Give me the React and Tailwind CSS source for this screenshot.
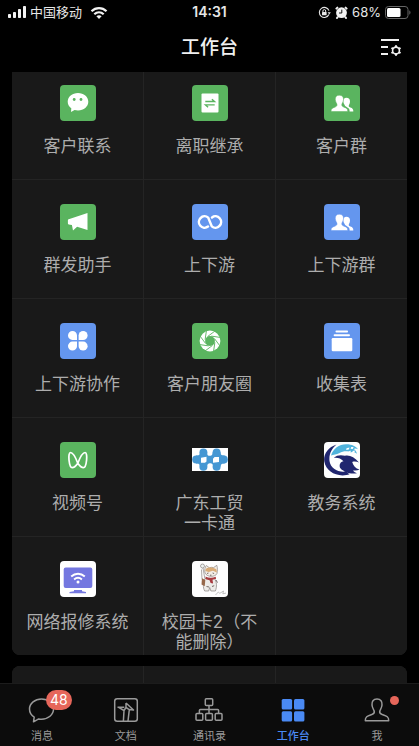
import React, { useState } from 'react';

const GREEN = '#5ab45f';
const BLUE = '#6496ee';

function Tile({ color, children }) {
  return (
    <svg viewBox="0 0 36 36" className="size-9" aria-hidden="true">
      <rect width="36" height="36" rx="4" fill={color} />
      {children}
    </svg>
  );
}

const ContactIcon = () => (
  <Tile color={GREEN}>
    <path d="M18 8C12.2 8 7.7 11.8 7.7 16.7c0 2.7 1.4 5 3.6 6.6L11 27l3.6-2.1c1.1.3 2.2.5 3.4.5 5.8 0 10.3-3.9 10.3-8.7S23.8 8 18 8z" fill="#fff" />
    <circle cx="14.2" cy="14.5" r="1.4" fill={GREEN} />
    <circle cx="21" cy="14.5" r="1.4" fill={GREEN} />
  </Tile>
);

const HandoverIcon = () => (
  <Tile color={GREEN}>
    <rect x="9.5" y="8.5" width="17" height="19" rx="1" fill="#fff" />
    <path d="M13.3 16.5h9.2l-2.6-2.3M22.7 19.9h-9.2l2.6 2.3" fill="none" stroke={GREEN} strokeWidth="1.4" />
  </Tile>
);

const GroupIcon = ({ color }) => (
  <Tile color={color}>
    <path d="M22.5 12.8c-2.5 0-3.4 1.9-3.2 4 .2 1.5 1 2.4 1.3 3.3.2 1.4 3 2.3 4.2 3.5.6.7.8 1.8.8 2.9h3.7c.2-2.6-.8-3.3-2.9-4.1-1.7-.6-2-1.4-1.4-2.5.7-1.2 1-2.2 1-3.5 0-2.3-1.3-3.6-3.5-3.6z" fill="#fff" />
    <path d="M15.2 10.2c-2.9 0-4.1 2-3.9 4.6.1 1.9 1.1 3 1.6 4.3.5 1.6-.4 2.5-2.1 3.1-2.6.9-3.9 1.5-3.7 4.3h16.6c.2-2.8-1.1-3.4-3.7-4.3-1.8-.6-2.6-1.5-2.1-3.1.5-1.3 1.4-2.4 1.6-4.3.2-2.7-1.2-4.6-4.3-4.6z" fill="#fff" stroke={color} strokeWidth=".5" />
  </Tile>
);

const BroadcastIcon = () => (
  <Tile color={GREEN}>
    <path d="M27.5 9v17l-10.4-3.3L13 26.6 11.9 21l-3.2-.6c-.5-.1-.8-.4-.8-.9v-3.2c0-.5.3-.9.8-1z" fill="#fff" />
  </Tile>
);

const LinkIcon = () => (
  <Tile color={BLUE}>
    <path d="M16 22.6A5.7 5.7 0 1 1 16.2 13.6L19.8 22.4A5.7 5.7 0 1 0 20 13.4" fill="none" stroke="#fff" strokeWidth="2.5" strokeLinecap="round" strokeLinejoin="round" />
  </Tile>
);

const CollabIcon = () => (
  <Tile color={BLUE}>
    {[0, 90, 180, 270].map(deg => (
      <path key={deg} d="M17 17h-4.6A4.5 4.5 0 1 1 17 12.5z" transform={`rotate(${deg} 17.8 17.8)`} fill="#fff" />
    ))}
  </Tile>
);

const MomentsIcon = () => (
  <Tile color={GREEN}>
    <circle cx="18" cy="18" r="10.4" fill="#fff" />
    <circle cx="18" cy="18" r="4.9" fill={GREEN} />
    {[0, 45, 90, 135, 180, 225, 270, 315].map(deg => (
      <path key={deg} d="M15.5 13.6 23 8" transform={`rotate(${deg} 18 18)`} stroke={GREEN} strokeWidth=".9" />
    ))}
  </Tile>
);

const FormIcon = () => (
  <Tile color={BLUE}>
    <rect x="11.5" y="7.6" width="12.5" height="1.9" rx=".8" fill="#fff" />
    <rect x="9.7" y="11.2" width="16.2" height="2" rx=".8" fill="#fff" />
    <rect x="7.7" y="15" width="20.6" height="13.2" rx="1.2" fill="#fff" />
  </Tile>
);

const ChannelsIcon = () => (
  <Tile color={GREEN}>
    <path
      d="M17.8 21.2C16 16.5 12.8 10.5 10.5 10.5c-3 0-1.5 15.2 1.7 15.2 1.9 0 3.8-1.9 5.6-4.5 1.8-4.7 5-10.7 7.3-10.7 3 0 1.5 15.2-1.7 15.2-1.9 0-3.8-1.9-5.6-4.5z"
      fill="none" stroke="#fff" strokeWidth="1.7" strokeLinejoin="round"
    />
  </Tile>
);

const CardIcon = () => (
  <svg viewBox="0 0 36 36" className="size-9" aria-hidden="true">
    <rect y="6" width="36" height="23" fill="#fff" />
    <g fill="#4597d3">
      <circle cx="4.2" cy="17.5" r="4" />
      <circle cx="11.4" cy="10.5" r="4" />
      <circle cx="11.4" cy="24.7" r="4" />
      <circle cx="24.6" cy="10.5" r="4" />
      <circle cx="24.6" cy="24.7" r="4" />
      <circle cx="31.8" cy="17.5" r="4" />
      <path d="M4 13.5c3 .5 4-1 4-3h7c0 3 1.6 3.6 3.3 3.3 1.7-.3 2.3-1.3 2.3-3.3h8c0 2 1 3.5 4 3v8c-3-.5-4 1-4 3h-7.5c0-2.5-1.5-3.6-3.2-3.3-1.7.3-2.9 1.3-2.9 3.3H8c0-2-1-3.5-4-3z" />
    </g>
    <path d="M9 15.7l5.5-1v4.8l-1.5 1.3H9zM21 16.8l1.6-1.8h4.4v4.9l-6 .8z" fill="#fff" />
  </svg>
);

const AcademicIcon = () => (
  <Tile color="#fdfefe">
    <path d="M7 13.5C9 6.5 15.5 2 22.5 2.2c5.5.1 9.5 2 11.5 5-2-.9-3.2-.8-4.5-.1 1.5.5 2.5 1.8 3.5 4.6-2-1.6-4-2-6.2-1.2-3.3-2.1-7.8-1.5-11.3.5-3 1.6-6.2 1.9-8.5 2.5z" fill="#4fb3dc" />
    <path d="M22.5 6.3l3-.9-.7 2.2-2.6.5zM27.2 4.9l2.4.2-.8 1.8-2.2-.2zM24 10l2.4-1.4.5 1.7-1.7 1.3zM28.5 9l2.3-.6-.2 2.2-2 .2z" fill="#fff" />
    <path d="M12.5 2.5C3.5 5.5-.9 13 .3 19.5 1.8 27.8 9.5 33.3 18.5 33.4c3 0 5-.5 7-1.2-1.3-.7-2.3-1.5-3-2.7C14 30.8 6.5 26.5 5.5 19 4.8 12.5 7.5 6.5 12.5 2.5z" fill="#20266f" />
    <path d="M9.8 15.8c3-3 7.7-3 11.2-2 4.7-1 9.5 1.5 14 6.7-2.5-1-4.7-1.2-6.8-.5 1 3.7 3.3 6.7 7.3 7.6-1.9 1-4 1.2-6.5.8 1 1.5 2.5 2.3 4 2.8-7 1-14-1-17-5.5-1-3.5.5-6 3.5-6.5-2.7-2.9-5.7-3.9-9.7-3.4z" fill="#20266f" />
    <path d="M9 24c2.5 3 6 4.6 10.5 4.8" fill="none" stroke="#fff" strokeWidth=".8" />
  </Tile>
);

const RepairIcon = () => (
  <Tile color="#fff">
    <rect x="3.7" y="6.5" width="28.6" height="20.5" rx="2" fill="#7477e0" />
    <path d="M11.2 15.5c4-3.7 9.6-3.7 13.6 0M14.1 18.5c2.3-2.1 5.5-2.1 7.8 0" fill="none" stroke="#fff" strokeWidth="1.9" />
    <circle cx="18" cy="20.9" r="1.5" fill="#fff" />
    <path d="M14 29h8v1.3l4 .7v1.3H9.5V31l4.5-.7z" fill="#7477e0" />
  </Tile>
);

const CampusCardIcon = () => (
  <Tile color="#fefefe">
    <g fill="none" stroke="#77716d" strokeWidth=".6">
      <path d="M13 12c-.8-3 .2-6.5 1.3-7.5l3 2.2c1.5-.5 3-.5 4.3-.1l3.2-2.3c.8 2.7.8 5.4.2 8.2-1.6 3.8-10 4-12-.5z" fill="#f3eee8" />
      <circle cx="10.5" cy="5" r="2" fill="#eef3f1" />
      <path d="M11 7l1.8 10.5M9.5 8.5l.5 10M13 17.5c-2 4-2.3 9-.3 12.5h4l1-3.5 1.2 3.5h4.5c1.7-4.5 1.4-9-.9-12.5z" fill="#edece8" />
    </g>
    <path d="M13.3 10c.2-2 1.5-3 3.4-3.4 2.3-.5 5 0 7.7 1.7l.5 3.2-4-1.8-4.2 1.4z" fill="#d9ab76" />
    <path d="M13.5 15.6c3 1.5 7 1.6 10.2.2l.4 2-3.6 1 .6 3.7-2.5-.5-1-2.8-3.9-1z" fill="#a83c40" />
    <path d="M10 17.2l3.3 1.8-.6 6.3-3.2-1.8z" fill="#96694b" />
    <path d="M15 12.5l1.5-.5M20.6 12l1.5.5M18 14.2h1.5M24 19l1.5 2.6M14.5 25.5l2.6.5M20 25.5l2.2-.8" stroke="#584b46" strokeWidth=".8" />
    <path d="M23.5 34l2.8-3 1.5 1.3 3.7-2.3-.7 2.8 3.2-.7" stroke="#9a9a9a" strokeWidth=".6" fill="none" />
  </Tile>
);

const apps = [
  { name: '客户联系', icon: <ContactIcon /> },
  { name: '离职继承', icon: <HandoverIcon /> },
  { name: '客户群', icon: <GroupIcon color={GREEN} /> },
  { name: '群发助手', icon: <BroadcastIcon /> },
  { name: '上下游', icon: <LinkIcon /> },
  { name: '上下游群', icon: <GroupIcon color={BLUE} /> },
  { name: '上下游协作', icon: <CollabIcon /> },
  { name: '客户朋友圈', icon: <MomentsIcon /> },
  { name: '收集表', icon: <FormIcon /> },
  { name: '视频号', icon: <ChannelsIcon /> },
  { name: '广东工贸\n一卡通', icon: <CardIcon /> },
  { name: '教务系统', icon: <AcademicIcon /> },
  { name: '网络报修系统', icon: <RepairIcon /> },
  { name: '校园卡2（不\n能删除）', icon: <CampusCardIcon /> },
];

const tabs = [
  {
    name: '消息', badge: 48,
    icon: <path d="M13.5 3C7 3 1.5 7.3 1.5 13c0 3.4 1.8 6.3 4.7 8.1L5.5 25.8l5.2-2.9c.9.2 1.8.3 2.8.3 6.7 0 12-4.4 12-10.1S20.2 3 13.5 3z" />,
  },
  {
    name: '文档',
    icon: (
      <>
        <rect x="2.7" y="2.7" width="22.6" height="22.6" rx="2.5" />
        <path d="M5.5 11.2h6.8M14 7v5M14 7l7.5 7-4.2-.4-1.3 11.5M6.2 11.2l5.8 3.3-.6 10.6M14 11.5l-2 3M14 11.5l3.3 2.1" />
      </>
    ),
  },
  {
    name: '通讯录',
    icon: (
      <>
        <rect x="10.3" y="2.8" width="7.4" height="6.6" rx="1" />
        <rect x="1" y="17.5" width="6.8" height="6.8" rx="1" />
        <rect x="10.6" y="17.5" width="6.8" height="6.8" rx="1" />
        <rect x="20.2" y="17.5" width="6.8" height="6.8" rx="1" />
        <path d="M14 9.4v8.1M4.4 17.5v-3q0-1 1-1h17.2q1 0 1 1v3" />
      </>
    ),
  },
  {
    name: '工作台',
    icon: (
      <g fill="currentColor" stroke="none">
        <rect x="2.7" y="3" width="10.4" height="10.4" rx="1.5" />
        <rect x="15" y="3" width="10.4" height="10.4" rx="1.5" />
        <rect x="2.7" y="15.2" width="10.4" height="10.4" rx="1.5" />
        <rect x="15" y="15.2" width="10.4" height="10.4" rx="1.5" />
      </g>
    ),
  },
  {
    name: '我', dot: true,
    icon: <path d="M14 3c-3.8 0-5.3 2.6-5 6 .2 2.5 1.3 4 2.1 5.8.6 1.6 0 2.8-1.8 3.5-4.5 1.6-7.2 2.1-7 6.4h23.4c.2-4.3-2.5-4.8-7-6.4-1.8-.7-2.4-1.9-1.8-3.5.8-1.8 1.9-3.3 2.1-5.8.3-3.4-1.2-6-5-6z" />,
  },
];

function StatusBar() {
  return (
    <div className="grid h-6 grid-cols-3 items-center px-2 text-[13px] leading-5 text-[#e6e6e6]">
      <div className="flex items-center gap-1">
        <svg viewBox="0 0 18 12" className="h-3 w-[18px]" fill="#f2f2f2" aria-hidden="true">
          <rect x="0" y="8" width="3" height="4" rx=".8" />
          <rect x="5" y="6" width="3" height="6" rx=".8" />
          <rect x="10" y="3" width="3" height="9" rx=".8" />
          <rect x="15" y="0" width="3" height="12" rx=".8" />
        </svg>
        <span>中国移动</span>
        <svg viewBox="0 0 18 13" className="ml-1 h-[13px] w-[18px]" fill="none" stroke="#f2f2f2" strokeWidth="2.2" aria-hidden="true">
          <path d="M1.5 5.2c4.3-4.2 10.7-4.2 15 0M4.3 8.3c2.7-2.5 6.7-2.5 9.4 0" />
          <path d="M6.4 10.3c1.5-1.3 3.7-1.3 5.2 0L9 12.9z" fill="#f2f2f2" stroke="none" />
        </svg>
      </div>
      <time className="text-center text-sm font-semibold">14:31</time>
      <div className="flex items-center justify-end gap-1">
        <svg viewBox="0 0 13 13" className="size-[13px]" fill="none" stroke="#e6e6e6" aria-hidden="true">
          <path d="M10.9 8.5A5 5 0 1 1 11 4.6" strokeWidth="1.1" />
          <path d="M9.6 6.2h3.2l-1.5 2.2z" fill="#e6e6e6" stroke="none" />
          <rect x="4" y="6" width="4.6" height="3.2" rx=".5" fill="#e6e6e6" stroke="none" />
          <path d="M4.9 6V5a1.4 1.4 0 0 1 2.8 0v1" />
        </svg>
        <svg viewBox="0 0 13 13" className="size-[13px]" aria-hidden="true">
          <circle cx="6.5" cy="6.7" r="5.4" fill="#f2f2f2" />
          <path d="M1.4 2.6l1-1M11.6 2.6l-1-1M2.6 11.2l-.6.8M10.4 11.2l.6.8" stroke="#f2f2f2" strokeWidth="2" strokeLinecap="round" />
          <path d="M6.8 3.6V7H4" stroke="#111" strokeWidth="1" fill="none" />
        </svg>
        <span>68%</span>
        <svg viewBox="0 0 26 13" className="h-[13px] w-[26px]" aria-hidden="true">
          <rect x=".5" y=".5" width="22.5" height="12" rx="3" fill="none" stroke="#666" />
          <rect x="2" y="2" width="13.5" height="9" rx="1.5" fill="#fff" />
          <path d="M24.3 4.3c1.6.7 1.6 3.7 0 4.4z" fill="#666" />
        </svg>
      </div>
    </div>
  );
}

export default function App() {
  const [active, setActive] = useState('工作台');

  return (
    <div className="flex h-dvh flex-col overflow-hidden bg-black font-['Inter','Noto_Sans_CJK_SC',sans-serif]">
      <StatusBar />
      <header className="grid h-12 shrink-0 grid-cols-[56px_1fr_56px] items-center">
        <h1 className="col-start-2 text-center text-[19px] leading-6 font-medium text-[#f0f0f0]">工作台</h1>
        <button aria-label="设置" className="flex items-center justify-center">
          <svg viewBox="0 0 22 20" className="h-5 w-[22px]" fill="none" stroke="#f0f0f0" strokeWidth="2" aria-hidden="true">
            <path d="M1 2h18M1 9h7M1 16h7" />
            <circle cx="16" cy="12.5" r="3.4" strokeWidth="1.6" />
            <path d="M16 7.3v1.8M16 15.9v1.8M20.5 9.9l-1.5.9M13 14.2l-1.5.9M20.5 15.1l-1.5-.9M13 10.8l-1.5-.9" />
          </svg>
        </button>
      </header>

      <main className="min-h-0 flex-1 overflow-hidden px-3">
        {/* list is scrolled a little, the first row sits partly under the header */}
        <div className="-mt-[11px] flex flex-col gap-[11px]">
          <section className="grid auto-rows-[118px] grid-cols-3 gap-px overflow-hidden rounded-lg bg-[#242424]">
            {apps.map(app => (
              <button key={app.name} className="flex flex-col items-center gap-[15px] bg-[#191919] pt-6 text-[17px] leading-5 text-[#adadad]">
                {app.icon}
                <span className="whitespace-pre-line">{app.name}</span>
              </button>
            ))}
            <div className="bg-[#191919]" />
          </section>
          <section className="grid h-[118px] shrink-0 grid-cols-3 gap-px overflow-hidden rounded-lg bg-[#242424]">
            <div className="bg-[#191919]" />
            <div className="bg-[#191919]" />
            <div className="bg-[#191919]" />
          </section>
        </div>
      </main>

      <nav className="z-10 grid shrink-0 grid-cols-5 border-t border-[#1c1c1c] bg-[#0c0c0c] pt-3 pb-0.5">
        {tabs.map(tab => (
          <button key={tab.name} onClick={() => setActive(tab.name)}
            className={`flex flex-col items-center gap-1 text-[11px] leading-4 ${active === tab.name ? 'font-medium text-[#4a8af4]' : 'text-[#9a9a9a]'}`}>
            <span className="relative">
              <svg viewBox="0 0 28 28" className="size-7" fill="none" stroke="currentColor" strokeWidth="1.5" strokeLinejoin="round" aria-hidden="true">{tab.icon}</svg>
              {tab.badge && <span className="absolute -top-1.5 left-[18px] rounded-full bg-[#e6665a] px-1 text-sm leading-5 font-normal text-white">{tab.badge}</span>}
              {tab.dot && <span className="absolute top-0 -right-2 size-[9px] rounded-full bg-[#e6665a]" />}
            </span>
            {tab.name}
          </button>
        ))}
      </nav>
    </div>
  );
}
